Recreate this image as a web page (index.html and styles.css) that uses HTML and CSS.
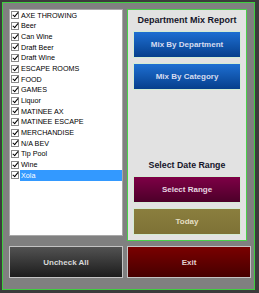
FILE: index.html
```html
<!DOCTYPE html>
<html lang="en">
  <head>
    <meta charset="UTF-8" />
    <meta name="viewport" content="width=device-width, initial-scale=1.0" />
    <title>Department Mix Report</title>
    <link rel="stylesheet" href="styles.css">
  </head>
  <body>
    <div class="frame">
      <div class="top">
        <ul class="list">
          <li><span class="box"></span><span class="label">AXE THROWING</span></li>
          <li><span class="box"></span><span class="label">Beer</span></li>
          <li><span class="box"></span><span class="label">Can Wine</span></li>
          <li><span class="box"></span><span class="label">Draft Beer</span></li>
          <li><span class="box"></span><span class="label">Draft Wine</span></li>
          <li><span class="box"></span><span class="label">ESCAPE ROOMS</span></li>
          <li><span class="box"></span><span class="label">FOOD</span></li>
          <li><span class="box"></span><span class="label">GAMES</span></li>
          <li><span class="box"></span><span class="label">Liquor</span></li>
          <li><span class="box"></span><span class="label">MATINEE AX</span></li>
          <li><span class="box"></span><span class="label">MATINEE ESCAPE</span></li>
          <li><span class="box"></span><span class="label">MERCHANDISE</span></li>
          <li><span class="box"></span><span class="label">N/A BEV</span></li>
          <li><span class="box"></span><span class="label">Tip Pool</span></li>
          <li><span class="box"></span><span class="label">Wine</span></li>
          <li class="selected"><span class="box"></span><span class="label">Xola</span></li>
        </ul>

        <div class="panel">
          <h2 class="panel-title">Department Mix Report</h2>
          <button class="btn blue">Mix By Department</button>
          <button class="btn blue">Mix By Category</button>

          <div class="range">
            <h2 class="range-title">Select Date Range</h2>
            <button class="btn plum">Select Range</button>
            <button class="btn olive">Today</button>
          </div>
        </div>
      </div>

      <div class="bottom">
        <button class="btn big dark">Uncheck All</button>
        <button class="btn big red">Exit</button>
      </div>
    </div>
  </body>
</html>
```

FILE: styles.css
```css
* {
  margin: 0;
  padding: 0;
  box-sizing: border-box;
  font-family: "Liberation Sans", Arial, sans-serif;
}

body {
  background-color: #3b3b3b;
  width: 259px;
  height: 293px;
  overflow: hidden;
}

.frame {
  margin: 2px 0 0 2px;
  width: 253px;
  height: 288px;
  border: 1px solid #3fcf3f;
  background-color: #808080;
  padding: 6px 0 0 6px;
}

.top {
  display: flex;
  align-items: flex-start;
  gap: 4px;
}

/* category list */
.list {
  list-style: none;
  width: 114px;
  height: 227px;
  border: 1px solid #a8a8a8;
  background-color: #ffffff;
}

.list li {
  display: flex;
  align-items: center;
  height: 10.67px;
  padding-left: 1px;
  font-size: 7.2px;
  color: #000000;
}

.box {
  position: relative;
  width: 8px;
  height: 8px;
  margin-right: 1px;
  border: 1px solid #8a8a8a;
  background-color: #ffffff;
  flex-shrink: 0;
}

.box::after {
  content: "";
  position: absolute;
  left: 2px;
  top: -1px;
  width: 2px;
  height: 5px;
  border-right: 1.5px solid #000000;
  border-bottom: 1.5px solid #000000;
  transform: rotate(40deg);
}

.label {
  flex: 1;
  height: 100%;
  display: flex;
  align-items: center;
  padding-left: 1px;
}

.selected .label {
  background-color: #3399ff;
  color: #ffffff;
}

/* report panel */
.panel {
  width: 120px;
  height: 232px;
  border: 1px solid #4ad04a;
  background-color: #e2e2e2;
  padding: 0 5px 5px 5px;
  display: flex;
  flex-direction: column;
}

.panel-title,
.range-title {
  text-align: center;
  font-weight: bold;
  color: #15152a;
  white-space: nowrap;
}

.panel-title {
  height: 21px;
  line-height: 21px;
  font-size: 9px;
}

.range {
  margin-top: auto;
  display: flex;
  flex-direction: column;
}

.range-title {
  height: 14px;
  line-height: 14px;
  margin-bottom: 4px;
  font-size: 8.8px;
}

.btn {
  width: 100%;
  height: 27px;
  border: 1px solid #d4ecd4;
  font-size: 8px;
  font-weight: bold;
  color: #d6dcf0;
  cursor: pointer;
}

.btn + .btn {
  margin-top: 5px;
}

.blue {
  background: linear-gradient(#1e6fd2, #063f8c);
}

.plum {
  background: linear-gradient(#7e0046, #4c0029);
  color: #e6d6e0;
}

.olive {
  background: linear-gradient(#8a7e3e, #7e7236);
  color: #e4dfc4;
}

/* bottom buttons */
.bottom {
  display: flex;
  gap: 4px;
  margin-top: 5px;
}

.big {
  height: 32px;
  border-color: #c4c4c4;
  color: #d8d8d8;
}

.bottom .btn + .btn {
  margin-top: 0;
}

.dark {
  width: 114px;
  background: linear-gradient(#525252, #1c1c1c);
}

.red {
  width: 124px;
  background: linear-gradient(#7a0000, #460000);
  color: #e2d0d0;
}
```
